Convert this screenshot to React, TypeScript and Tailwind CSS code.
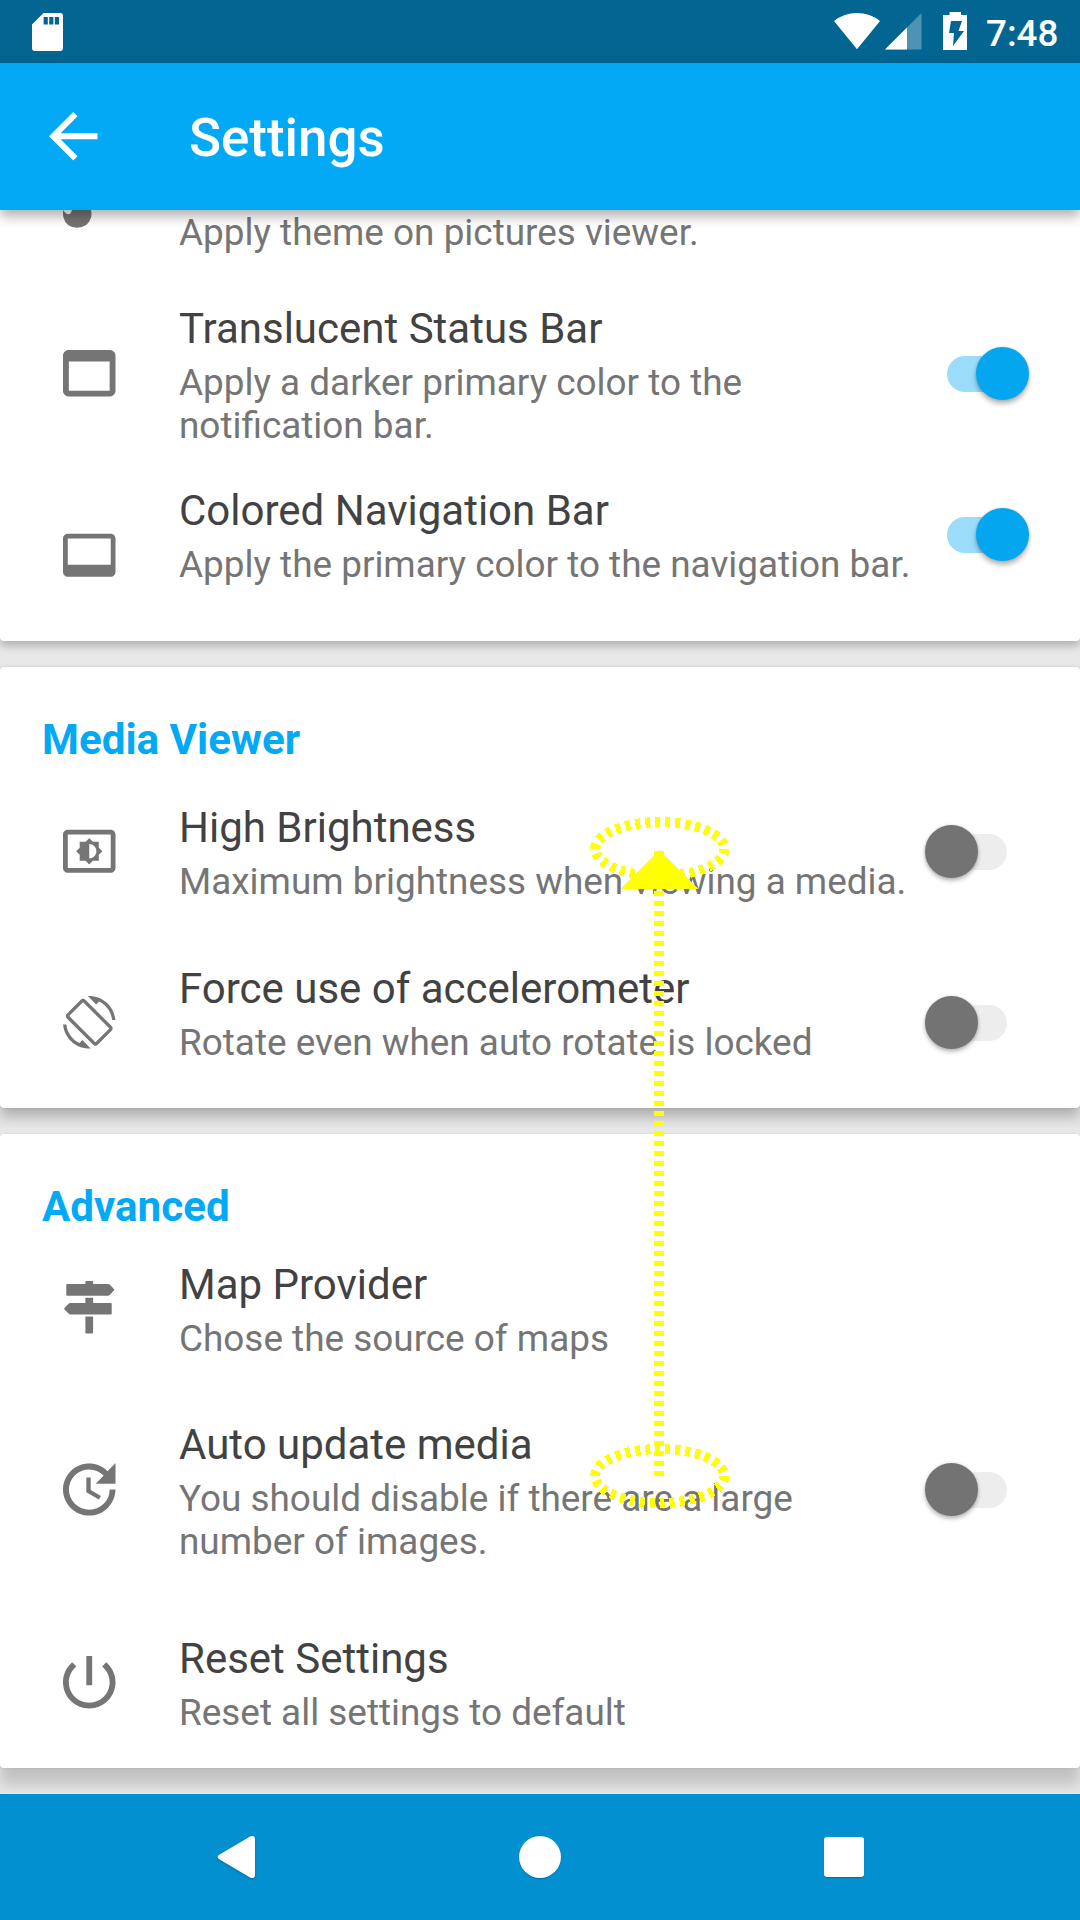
import type { ReactNode } from "react";

function Svg({ box, children }: { box: string; children: ReactNode }) {
  return (
    <svg viewBox={box} className="h-[52.5px] w-[52.5px] fill-[#757575]">
      {children}
    </svg>
  );
}

const icons = {
  statusBar: (
    <Svg box="3 3 18 18">
      <path d="M19 4H5c-1.11 0-2 .9-2 2v12c0 1.1.89 2 2 2h14c1.1 0 2-.9 2-2V6c0-1.1-.89-2-2-2zm0 14H5V8h14v10z" />
    </Svg>
  ),
  navBar: (
    <Svg box="1 1 22 22">
      <path d="M21 3H3c-1.1 0-2 .9-2 2v14c0 1.1.9 2 2 2h18c1.1 0 2-.9 2-2V5c0-1.1-.9-2-2-2zm0 13H3V5h18v11z" />
    </Svg>
  ),
  brightness: (
    <Svg box="1 1 22 22">
      <path d="M21 3H3c-1.1 0-2 .9-2 2v14c0 1.1.9 2 2 2h18c1.1 0 2-.9 2-2V5c0-1.1-.9-2-2-2zm0 16.01H3V4.99h18v14.02zM8 16h2.5l1.5 1.5 1.5-1.5H16v-2.5l1.5-1.5-1.5-1.5V8h-2.5L12 6.5 10.5 8H8v2.5L6.5 12 8 13.5V16zm4-7c1.66 0 3 1.34 3 3s-1.34 3-3 3V9z" />
    </Svg>
  ),
  rotation: (
    <Svg box="0 0 24 24">
      <path d="M16.48 2.52c3.27 1.55 5.61 4.72 5.97 8.48h1.5C23.44 4.84 18.29 0 12 0l-.66.03 3.81 3.81 1.33-1.32zm-6.25-.77c-.59-.59-1.54-.59-2.12 0L1.75 8.11c-.59.59-.59 1.54 0 2.12l12.02 12.02c.59.59 1.54.59 2.12 0l6.36-6.36c.59-.59.59-1.54 0-2.12L10.23 1.75zm4.6 19.44L2.81 9.17l6.36-6.36 12.02 12.02-6.36 6.36zm-7.31.29C4.25 19.94 1.91 16.76 1.55 13H.05C.56 19.16 5.71 24 12 24l.66-.03-3.81-3.81-1.33 1.32z" />
    </Svg>
  ),
  signs: (
    <Svg box="0 0 52.5 52.5">
      <path d="M22.4 3V1q0-1 1-1h5.7q1 0 1 1v2h15q1 0 1.8.8l4 4.2q.7.8 0 1.6l-4 4.2q-.8.9-1.8.9H4.3q-1 0-1-1V4q0-1 1-1zM22.4 16.7h7.7V22h17.6q1 0 1 1v9.4q0 1-1 1H7.3q-1 0-1.8-.8L1.5 28.5q-.8-.8 0-1.6l4-4.1q.8-.8 1.8-.8h15.1zM22.4 35.4h7.7v16.1q0 1-1 1h-5.7q-1 0-1-1z" />
    </Svg>
  ),
  update: (
    <Svg box="3 3 18 18">
      <path d="M21 10.12h-6.78l2.74-2.82c-2.73-2.7-7.15-2.8-9.88-.1-2.73 2.71-2.73 7.08 0 9.79 2.73 2.71 7.15 2.71 9.88 0C18.32 15.65 19 14.08 19 12.1h2c0 1.98-.88 4.55-2.64 6.29-3.51 3.48-9.21 3.48-12.72 0-3.5-3.47-3.53-9.11-.02-12.58 3.51-3.47 9.14-3.47 12.65 0L21 3v7.12zM12.5 8v4.25l3.5 2.08-.72 1.21L11 13V8h1.5z" />
    </Svg>
  ),
  power: (
    <Svg box="3 3 18 18">
      <path d="M13 3h-2v10h2V3zm4.83 2.17l-1.42 1.42C17.99 7.86 19 9.81 19 12c0 3.87-3.13 7-7 7s-7-3.13-7-7c0-2.19 1.01-4.14 2.58-5.42L6.17 5.17C4.23 6.82 3 9.26 3 12c0 4.97 4.03 9 9 9s9-4.03 9-9c0-2.74-1.23-5.18-3.17-6.83z" />
    </Svg>
  ),
};

function Toggle({ on }: { on?: boolean }) {
  return on ? (
    <div className="mr-[51px] flex h-[53px] w-[82px] items-center">
      <div className="mt-px h-9 w-[75px] shrink-0 rounded-full bg-[#9bdcfb]" />
      <div className="-ml-[46px] h-[53px] w-[53px] shrink-0 rounded-full bg-[#05a6f0] shadow-[0_4px_5px_rgba(0,0,0,0.28),0_0_3px_rgba(0,0,0,0.15)]" />
    </div>
  ) : (
    <div className="mr-[72px] flex h-[53px] w-[83px] items-center">
      <div className="z-1 h-[53px] w-[53px] shrink-0 rounded-full bg-[#737373] shadow-[0_3px_4px_rgba(0,0,0,0.25),0_0_3px_rgba(0,0,0,0.15)]" />
      <div className="mt-px -ml-[46px] h-9 w-[75px] shrink-0 rounded-full bg-[#ededed]" />
    </div>
  );
}

type RowProps = {
  icon: ReactNode;
  title: string;
  lines: string[];
  height: string;
  iconTop: string;
  toggle?: "on" | "off";
  toggleTop?: string;
};

function Row({ icon, title, lines, height, iconTop, toggle, toggleTop = "" }: RowProps) {
  return (
    <div className={`flex items-start pl-[63px] ${height}`}>
      <div className={`w-[116px] shrink-0 ${iconTop}`}>{icon}</div>
      <div className="flex-1 whitespace-nowrap">
        <div className="mb-2 text-[42px] leading-[49px] text-[#424242]">{title}</div>
        {lines.map((l) => (
          <div key={l} className="text-[36.9px] leading-[43px] text-[#757575]">
            {l}
          </div>
        ))}
      </div>
      {toggle && (
        <div className={toggleTop}>
          <Toggle on={toggle === "on"} />
        </div>
      )}
    </div>
  );
}

function SectionTitle({ children, className }: { children: string; className: string }) {
  return (
    <div className={`pl-[42px] pt-12 text-[42.15px] font-bold leading-[49px] text-[#03a9f4] ${className}`}>
      {children}
    </div>
  );
}

function StatusBar() {
  return (
    <div className="flex h-[63px] shrink-0 justify-between bg-[#026592] pl-8">
      <svg viewBox="0 0 31 38" className="mt-[12.5px] h-[38px] w-[31px]">
        <path
          fill="#fff"
          fillRule="evenodd"
          d="M11.5 0H28q3 0 3 3v32q0 3-3 3H3q-3 0-3-3V11.5zM11.6 4v7.5h4.2V4zM17.2 4v7.5h4.2V4zM22.8 4v7.5h4.2V4z"
        />
      </svg>
      <div className="flex w-[246px]">
        <svg viewBox="0 0 134 63" className="h-[63px] w-[134px]">
          <path fill="#fff" d="M0 21Q10 13 23 13T46 21L23 49.3z" />
          <path fill="#fff" fillOpacity=".3" d="M87.5 13v36.500H51z" />
          <path fill="#fff" d="M73 27.5v22H51z" />
          <path
            fill="#fff"
            fillRule="evenodd"
            d="M115.500 12H127v3h6v35h-24V15h6.500zM117 21l-2 12h5l-1 13 11-15h-5.500l3.500-10z"
          />
        </svg>
        <div className="ml-[18px] mt-3 text-[36.75px] font-medium leading-[43px] text-white">7:48</div>
      </div>
    </div>
  );
}

function AppBar() {
  return (
    <div className="z-10 flex h-[147px] shrink-0 items-center bg-[#03a9f4] pl-[49px] shadow-[0_6px_12px_rgba(0,0,0,0.32)]">
      <svg viewBox="4 4 16 16" className="h-[48.5px] w-[48.5px] fill-white">
        <path d="M20 11H7.830l5.590-5.590L12 4l-8 8 8 8 1.410-1.410L7.830 13H20v-2z" />
      </svg>
      <div className="ml-[91.5px] mt-[2px] text-[52.9px] font-medium leading-[62px] text-white">Settings</div>
    </div>
  );
}

function NavBar() {
  return (
    <div className="z-10 flex h-[126px] shrink-0 items-center justify-between bg-[#0290d1] pl-[217px] pr-[216px]">
      <svg viewBox="0 0 38 42" className="h-[42px] w-[38px] drop-shadow-[0_1px_1px_rgba(0,0,0,0.25)]">
        <path fill="#fff" d="M1.8 19L33 .6Q37.800-1.500 38 3v36q-.2 4.500-5 2.400L1.800 23q-2.400-2 0-4z" />
      </svg>
      <div className="ml-[1px] h-[42px] w-[42px] rounded-full bg-white shadow-[0_1px_1px_rgba(0,0,0,0.25)]" />
      <div className="h-10 w-10 rounded-[3px] bg-white shadow-[0_1px_1px_rgba(0,0,0,0.25)]" />
    </div>
  );
}

/* Swipe gesture marker drawn over the whole screen. */
function Gesture() {
  return (
    <svg
      viewBox="0 0 1080 1920"
      shapeRendering="crispEdges"
      className="pointer-events-none absolute inset-0 z-20 h-[1920px] w-[1080px]"
    >
      <g fill="none" stroke="#ff0" strokeWidth="10" strokeDasharray="5 5">
        <ellipse cx="659.8" cy="849" rx="64.6" ry="27" />
        <ellipse cx="659.8" cy="1476" rx="64.6" ry="27" />
        <path d="M659 1476V851" />
      </g>
      <path fill="#ff0" d="M659 850l39 39h-78z" />
    </svg>
  );
}

export default function App() {
  return (
    <div className="relative flex h-[1920px] w-[1080px] flex-col overflow-hidden bg-[#e8e8e8] font-[Roboto,sans-serif]">
      <StatusBar />
      <AppBar />
      <div className="flex flex-1 flex-col gap-[26px]">
        <div className="h-[431px] rounded-b-[4px] bg-white shadow-[0_5px_9px_rgba(0,0,0,0.24)]">
          <div className="flex h-[94px] items-start pl-[63px] pt-px">
            <svg viewBox="0 0 29 18" className="-mt-px h-[18px] w-[29px]">
              <path fill="#757575" d="M0 0Q2.500 4 5.500 4.300Q8 4 9 0H28Q29 4 28 7.500Q25 17.700 14 17.800Q3 17.500 .5 7.500Q-.3 4 0 0z" />
            </svg>
            <div className="ml-[87px] text-[36.9px] leading-[43px] text-[#757575]">
              Apply theme on pictures viewer.
            </div>
          </div>
          <Row
            icon={icons.statusBar}
            title="Translucent Status Bar"
            lines={["Apply a darker primary color to the", "notification bar."]}
            height="h-[182px]"
            iconTop="mt-[43px]"
            toggle="on"
            toggleTop="mt-[43px]"
          />
          <Row
            icon={icons.navBar}
            title="Colored Navigation Bar"
            lines={["Apply the primary color to the navigation bar."]}
            height="h-[155px]"
            iconTop="mt-[43px]"
            toggle="on"
            toggleTop="mt-[22px]"
          />
        </div>
        <div className="h-[441px] rounded-[4px] bg-white shadow-[0_9px_14px_rgba(0,0,0,0.25),0_0_3px_rgba(0,0,0,0.13)]">
          <SectionTitle className="h-[136px]">Media Viewer</SectionTitle>
          <Row
            icon={icons.brightness}
            title="High Brightness"
            lines={["Maximum brightness when viewing a media."]}
            height="h-[161px]"
            iconTop="mt-[22px]"
            toggle="off"
            toggleTop="mt-[22px]"
          />
          <Row
            icon={icons.rotation}
            title="Force use of accelerometer"
            lines={["Rotate even when auto rotate is locked"]}
            height="h-[144px]"
            iconTop="mt-8"
            toggle="off"
            toggleTop="mt-8"
          />
        </div>
        <div className="h-[634px] rounded-[4px] bg-white shadow-[0_17px_14px_rgba(0,0,0,0.17),0_0_3px_rgba(0,0,0,0.1)]">
          <SectionTitle className="h-[126px]">Advanced</SectionTitle>
          <Row
            icon={icons.signs}
            title="Map Provider"
            lines={["Chose the source of maps"]}
            height="h-[160px]"
            iconTop="mt-[21px]"
          />
          <Row
            icon={icons.update}
            title="Auto update media"
            lines={["You should disable if there are a large", "number of images."]}
            height="h-[214px]"
            iconTop="mt-[43px]"
            toggle="off"
            toggleTop="mt-[43px]"
          />
          <Row
            icon={icons.power}
            title="Reset Settings"
            lines={["Reset all settings to default"]}
            height="h-[134px]"
            iconTop="mt-[22px]"
          />
        </div>
      </div>
      <NavBar />
      <Gesture />
    </div>
  );
}
